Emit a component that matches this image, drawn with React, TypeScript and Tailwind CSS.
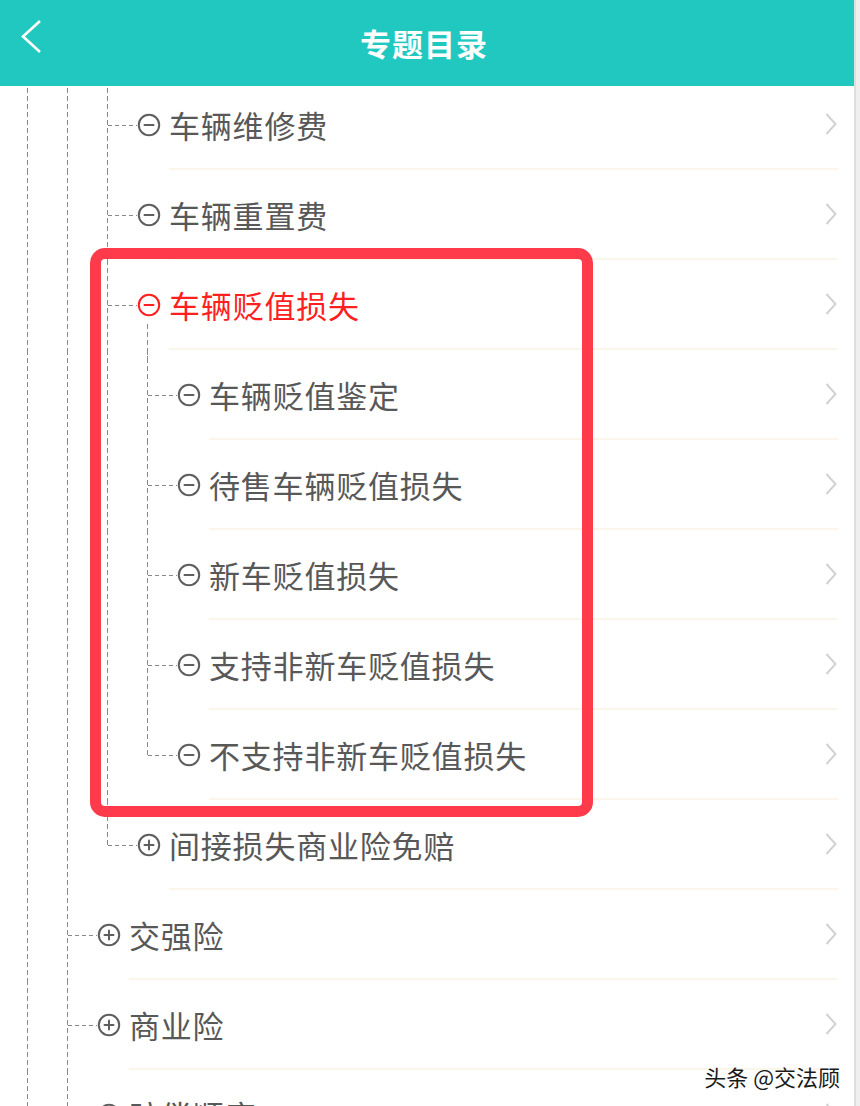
import React from "react";

type Item = {
  label: string;
  depth: number;
  icon: "minus" | "plus";
  last?: boolean;
  active?: boolean;
  hasChildren?: boolean;
};

const items: Item[] = [
  { label: "车辆维修费", depth: 2, icon: "minus" },
  { label: "车辆重置费", depth: 2, icon: "minus" },
  { label: "车辆贬值损失", depth: 2, icon: "minus", active: true, hasChildren: true },
  { label: "车辆贬值鉴定", depth: 3, icon: "minus" },
  { label: "待售车辆贬值损失", depth: 3, icon: "minus" },
  { label: "新车贬值损失", depth: 3, icon: "minus" },
  { label: "支持非新车贬值损失", depth: 3, icon: "minus" },
  { label: "不支持非新车贬值损失", depth: 3, icon: "minus", last: true },
  { label: "间接损失商业险免赔", depth: 2, icon: "plus", last: true },
  { label: "交强险", depth: 1, icon: "plus" },
  { label: "商业险", depth: 1, icon: "plus" },
  { label: "赔偿顺序", depth: 1, icon: "plus" },
];

const vDash =
  "w-px bg-[linear-gradient(to_bottom,#888888_0,#888888_5px,transparent_5px,transparent_8px)] bg-[length:1px_8px]";
const hDash =
  "h-px bg-[linear-gradient(to_right,#888888_0,#888888_4px,transparent_4px,transparent_7px)] bg-[length:7px_1px]";

function CircleIcon({ type, active }: { type: "minus" | "plus"; active?: boolean }) {
  const c = active ? "#ff1f1f" : "#5e5e5e";
  return (
    <svg width="24" height="24" viewBox="0 0 24 24" className="shrink-0">
      <circle cx="12" cy="12" r="10.2" fill="none" stroke={c} strokeWidth="2" />
      <line x1="7.5" y1="12" x2="16.5" y2="12" stroke={c} strokeWidth="2" strokeLinecap="round" />
      {type === "plus" && (
        <line x1="12" y1="7.5" x2="12" y2="16.5" stroke={c} strokeWidth="2" strokeLinecap="round" />
      )}
    </svg>
  );
}

function Chevron() {
  return (
    <svg width="12" height="24" viewBox="0 0 12 24" className="shrink-0">
      <path d="M1.5 2 L10.5 12 L1.5 22" fill="none" stroke="#d2d2d2" strokeWidth="2" />
    </svg>
  );
}

function TreeRow({ item }: { item: Item }) {
  const guides = Array.from({ length: item.depth });
  return (
    <div className="flex h-[90px]">
      <div className="w-[27px] shrink-0" />
      {guides.map((_, i) => (
        <div key={i} className="w-10 shrink-0 flex">
          <div className={`${vDash} h-full`} />
        </div>
      ))}
      {/* 연결선 + 아이콘 */}
      <div className="w-[62px] shrink-0 flex items-center">
        <div className={`${vDash} self-start ${item.last ? "h-[45px]" : "h-full"}`} />
        <div className={`${hDash} w-[29px]`} />
        <div className="relative">
          <CircleIcon type={item.icon} active={item.active} />
          {item.hasChildren && (
            <div className={`${vDash} absolute left-[10px] top-[31px] h-[34px]`} />
          )}
        </div>
      </div>
      <div className="flex-1 flex items-center justify-between border-b-2 border-[#fbf5ea] mr-4 pr-[1px]">
        <span
          className={`text-[31px] leading-none tracking-[0.8px] ${
            item.active ? "text-[#ff1f1f]" : "text-[#585858]"
          }`}
        >
          {item.label}
        </span>
        <Chevron />
      </div>
    </div>
  );
}

export default function App() {
  return (
    <div
      className="relative h-[1106px] w-[860px] overflow-hidden bg-white flex"
      style={{ fontFamily: '"Noto Sans CJK SC", "Noto Sans", sans-serif' }}
    >
      <div className="w-[854px] flex flex-col">
        {/* 상단 헤더 */}
        <div className="relative z-10 h-[86px] shrink-0 bg-[#21c8bf] flex items-center justify-center pr-[6px]">
          <svg width="24" height="40" viewBox="0 0 24 40" className="absolute left-[20px] top-[18px]">
            <path d="M20 3 L3 18.5 L20 34" fill="none" stroke="#ffffff" strokeWidth="2.6" />
          </svg>
          <span className="text-white text-[31px] font-bold tracking-[1px]">专题目录</span>
        </div>

        {/* 목록 */}
        <div className="-mt-[6px]">
          {items.map((item) => (
            <TreeRow key={item.label} item={item} />
          ))}
        </div>
      </div>

      {/* 스크롤바 */}
      <div className="w-[6px] h-full border-l-2 border-[#dedede] bg-[#efefef]" />

      {/* 강조 박스 */}
      <div className="absolute left-[90px] top-[248px] w-[503px] h-[569px] border-[11px] border-[#ff3a4a] rounded-[15px] pointer-events-none" />

      {/* 워터마크 */}
      <div className="absolute right-[20px] top-[1060px] text-[22px] text-[#1a1a1a] [text-shadow:0_0_2px_#fff,0_0_2px_#fff]">
        头条 @交法顾
      </div>
    </div>
  );
}
